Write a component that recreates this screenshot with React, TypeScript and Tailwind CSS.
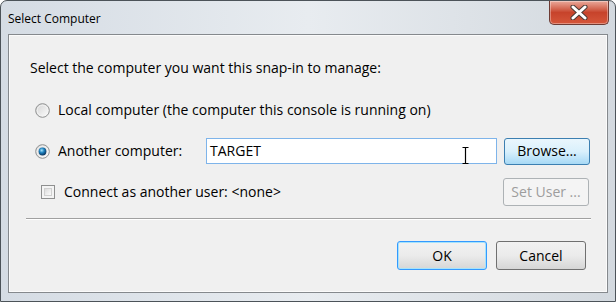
import React from 'react';

function Radio({ checked }: { checked?: boolean }) {
  return (
    <svg width="15" height="15" viewBox="0 0 15 15" className="shrink-0">
      <defs>
        <linearGradient id="rfill" x1="0" y1="0" x2="1" y2="1">
          <stop offset="0" stopColor="#d2d2d2" />
          <stop offset="1" stopColor="#ffffff" />
        </linearGradient>
        <radialGradient id="rdot" cx="0.4" cy="0.35" r="0.7">
          <stop offset="0" stopColor="#a6e3fb" />
          <stop offset="0.45" stopColor="#1b7fbd" />
          <stop offset="1" stopColor="#0a2c52" />
        </radialGradient>
      </defs>
      <circle cx="7.5" cy="7.5" r="6.8" fill="url(#rfill)" stroke="#8e8f8f" strokeWidth="1" />
      <circle cx="7.5" cy="7.5" r="5.3" fill="none" stroke="#f4f4f4" strokeWidth="0.8" />
      {checked && <circle cx="7.5" cy="7.5" r="3.9" fill="url(#rdot)" />}
    </svg>
  );
}

function Checkbox() {
  return (
    <div className="w-[14px] h-[14px] shrink-0 border border-[#8e8f8f] bg-[#f4f4f4] p-[2px]">
      <div className="w-full h-full border border-[#d0d0d0] bg-gradient-to-br from-[#dcdcdc] to-[#fbfbfb]" />
    </div>
  );
}

function Button({
  children,
  variant = 'normal',
  className = '',
}: {
  children: React.ReactNode;
  variant?: 'normal' | 'hover' | 'default' | 'disabled';
  className?: string;
}) {
  const styles = {
    normal: 'border-[#707070] bg-gradient-to-b from-[#f2f2f2] via-[#ebebeb] to-[#d6d6d6] text-black',
    hover: 'border-[#3c7fb1] bg-gradient-to-b from-[#eaf6fd] via-[#d9f0fc] to-[#a7d9f5] text-black',
    default: 'border-[#3399ff] bg-gradient-to-b from-[#f2f2f2] via-[#ebebeb] to-[#d6d6d6] text-black shadow-[inset_0_0_0_1px_#a6e3fb]',
    disabled: 'border-[#adb2b5] bg-[#f4f4f4] text-[#9d9d9d]',
  };
  return (
    <div
      className={`flex items-center justify-center rounded-[3px] border text-[14px] ${styles[variant]} ${className}`}
    >
      {children}
    </div>
  );
}

export default function App() {
  return (
    <div className="w-[616px] h-[302px] relative overflow-hidden rounded-t-[7px] border border-[#4c5359] bg-gradient-to-r from-[#d5dce4] via-[#e8ecf0] to-[#d3d9df] font-['Segoe_UI','Open_Sans',sans-serif] text-[14px] text-black">
      {/* title bar */}
      <div className="h-[33px] flex justify-between">
        <div className="pl-[7px] pt-[8px] text-[12px] leading-[20px]">Select Computer</div>
        <div className="mr-[6px] w-[60px] h-[24px] rounded-b-[5px] border border-t-0 border-[#6d3b34] bg-gradient-to-b from-[#e9a99b] via-[#c7432b] to-[#d5563a] flex items-center justify-center shadow-[inset_0_0_0_1px_rgba(255,255,255,0.35)]">
          <svg width="18" height="15" viewBox="0 0 18 15">
            <path d="M3 2 L15 13 M15 2 L3 13" stroke="#4a3a36" strokeWidth="5" strokeLinecap="round" />
            <path d="M3 2 L15 13 M15 2 L3 13" stroke="#ffffff" strokeWidth="3" strokeLinecap="round" />
          </svg>
        </div>
      </div>

      {/* client area */}
      <div className="mx-[7px] h-[259px] border border-[#85898d] bg-[#f0f0f0] shadow-[inset_0_0_0_1px_#fbfbfb]">
        <div className="pl-[21px] pt-[22px] leading-[22px]">
          <div>Select the computer you want this snap-in to manage:</div>

          <div className="mt-[20px] flex items-center h-[22px] pl-[5px]">
            <Radio />
            <span className="ml-[8px]">Local computer (the computer this console is running on)</span>
          </div>

          <div className="mt-[16px] flex items-center h-[28px] pl-[5px]">
            <Radio checked />
            <span className="ml-[8px] w-[148px]">Another computer:</span>
            <div className="relative w-[291px] h-[26px] border border-[#7eb4ea] bg-white pl-[3px] flex items-center">
              <span>TARGET</span>
              <svg className="absolute left-[255px] top-[8px]" width="7" height="17" viewBox="0 0 7 17">
                <path d="M0.5 0.5 H6.5 M3.5 0.5 V16.5 M0.5 16.5 H6.5" stroke="#000" strokeWidth="1.2" fill="none" />
              </svg>
            </div>
            <Button variant="hover" className="ml-[7px] w-[86px] h-[27px]">Browse...</Button>
          </div>

          <div className="mt-[13px] flex items-center h-[28px]">
            <div className="pl-[11px] flex items-center">
              <Checkbox />
              <span className="ml-[9px]">Connect as another user: &lt;none&gt;</span>
            </div>
            <Button variant="disabled" className="ml-auto mr-[18px] w-[86px] h-[28px]">Set User ...</Button>
          </div>
        </div>

        <div className="mt-[12px] ml-[17px] mr-[16px] h-[2px] border-t border-[#a0a0a0] border-b border-b-white" />

        <div className="mt-[21px] flex justify-end gap-[9px] pr-[21px]">
          <Button variant="default" className="w-[90px] h-[29px]">OK</Button>
          <Button className="w-[90px] h-[29px]">Cancel</Button>
        </div>
      </div>
    </div>
  );
}
